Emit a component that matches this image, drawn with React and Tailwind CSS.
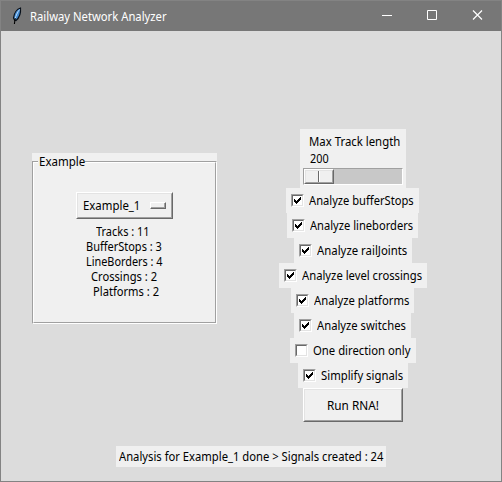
import React, { useLayoutEffect, useRef } from 'react';

// Text squeezed or stretched horizontally to a fixed width.
function Label({ width, children, className = '' }) {
  const outer = useRef(null);
  const inner = useRef(null);
  useLayoutEffect(() => {
    inner.current.style.transform = `scaleX(${outer.current.offsetWidth / inner.current.offsetWidth})`;
  }, [children]);
  return (
    <span ref={outer} className={`block shrink-0 whitespace-nowrap ${width} ${className}`}>
      <span ref={inner} className="inline-block origin-left">{children}</span>
    </span>
  );
}

function Raised({ className = '', children }) {
  return (
    <div className={`border border-t-white border-l-white border-r-[#696969] border-b-[#696969] bg-[#f0f0f0] ${className}`}>
      <div className="flex h-full items-center border border-t-[#e3e3e3] border-l-[#e3e3e3] border-r-[#a0a0a0] border-b-[#a0a0a0]">
        {children}
      </div>
    </div>
  );
}

function CheckRow({ row, text, label, checked = true }) {
  return (
    <label className={`flex h-[25px] items-start bg-[#f0f0f0] pl-[5px] ${row}`}>
      <span className="mt-[6px] block h-[13px] w-[13px] shrink-0 border border-t-[#a0a0a0] border-l-[#a0a0a0] border-r-white border-b-white">
        <span className="block h-[11px] w-[11px] border border-t-[#696969] border-l-[#696969] border-r-[#e3e3e3] border-b-[#e3e3e3] bg-white">
          {checked && (
            <svg viewBox="0 0 9 9" className="block h-[9px] w-[9px]" shapeRendering="crispEdges">
              <path d="M1 3h1v1h1v1h1v-1h1v-1h1v-1h1v-1h1v3h-1v1h-1v1h-1v1h-1v1h-1v-1h-1v-1h-1z" fill="#000" />
            </svg>
          )}
        </span>
      </span>
      <Label width={text} className="mt-[4px] ml-[5px]">{label}</Label>
    </label>
  );
}

export default function App() {
  return (
    <div className="flex h-[482px] w-[502px] flex-col overflow-hidden border border-t-0 border-[#838383] bg-[#dcdcdc] font-['Noto_Sans','Open_Sans',sans-serif] text-[12px] leading-[17px] text-black">
      <header className="flex h-[31px] shrink-0 items-center border-t border-[#838383] bg-[#777777] text-white">
        <svg viewBox="0 0 12 18" className="ml-[10px] h-[18px] w-[12px] shrink-0">
          <path d="M9.5 1C6 2 3 6 2.5 11l1 2L5 13.5C8 11 10 7 9.5 1z" fill="#4289cf" stroke="#080f18" strokeWidth="1.2" />
          <path d="M8.6 2.5C6.5 5 4.8 9 4 12" stroke="#b9ddff" strokeWidth="1" fill="none" />
          <path d="M4.2 11L3.4 17" stroke="#000" strokeWidth="1.1" />
        </svg>
        <Label width="w-[137px]" className="ml-[7px]">Railway Network Analyzer</Label>
        <svg viewBox="0 0 142 30" className="ml-auto h-[30px] w-[142px] shrink-0" fill="none" stroke="#fff">
          <path d="M23 14.5h10" />
          <path d="M68.5 9.500h9v9h-9z" />
          <path d="M114 9.500l9 9m0-9l-9 9" strokeWidth="1.200" />
        </svg>
      </header>

      <main className="flex h-[407px] shrink-0">
        <section className="mt-[122px] ml-[31px] h-[171px] w-[185px] shrink-0 bg-[#f0f0f0] pt-[8px]">
          <div className="h-[163px] border border-t-[#a0a0a0] border-l-[#a0a0a0] border-r-white border-b-white">
            <div className="flex h-full flex-col border border-t-white border-l-white border-r-[#a0a0a0] border-b-[#a0a0a0]">
              <div className="-mt-[10px] ml-[4px] w-[47px] bg-[#f0f0f0] pl-[1px]">
                <Label width="w-[46px]">Example</Label>
              </div>
              <Raised className="mt-[22px] ml-[42px] h-[27px] w-[97px]">
                <Label width="w-[57px]" className="ml-[5px]">Example_1</Label>
                <span className="ml-[10px] block h-[7px] w-[16px] border border-t-white border-l-white border-r-[#696969] border-b-[#696969]">
                  <span className="block h-full border-r border-b border-[#a0a0a0]" />
                </span>
              </Raised>
              <div className="mt-[5px] leading-[15px]">
                <Label width="w-[54px]" className="ml-[62px]">Tracks : 11</Label>
                <Label width="w-[76px]" className="ml-[52px]">BufferStops : 3</Label>
                <Label width="w-[77px]" className="ml-[52px]">LineBorders : 4</Label>
                <Label width="w-[66px]" className="ml-[57px]">Crossings : 2</Label>
                <Label width="w-[66px]" className="ml-[59px]">Platforms : 2</Label>
              </div>
            </div>
          </div>
        </section>

        <section className="mt-[98px] ml-[62px] flex w-[148px] shrink-0 flex-col">
          <div className="ml-[21px] h-[59px] w-[106px] bg-[#f0f0f0] pt-[4px] pl-[3px]">
            <Label width="w-[91px]" className="ml-[6px]">Max Track length</Label>
            <Label width="w-[19px]" className="ml-[7px]">200</Label>
            <div className="mt-[1px] h-[17px] w-[100px] border border-t-[#a0a0a0] border-l-[#a0a0a0] border-r-white border-b-white bg-[#c8c8c8]">
              <Raised className="h-[15px] w-[30px]">
                <span className="ml-[12px] block h-full w-[2px] border-r border-r-white border-l border-l-[#696969]" />
              </Raised>
            </div>
          </div>
          <CheckRow row="ml-[7px] w-[133px]" text="w-[105px]" label="Analyze bufferStops" />
          <CheckRow row="ml-[8px] w-[131px]" text="w-[103px]" label="Analyze lineborders" />
          <CheckRow row="ml-[15px] w-[118px]" text="w-[90px]" label="Analyze railJoints" />
          <CheckRow row="ml-[0px] w-[148px]" text="w-[120px]" label="Analyze level crossings" />
          <CheckRow row="ml-[12px] w-[123px]" text="w-[95px]" label="Analyze platforms" />
          <CheckRow row="ml-[15px] w-[117px]" text="w-[89px]" label="Analyze switches" />
          <CheckRow row="ml-[11px] w-[126px]" text="w-[98px]" label="One direction only" checked={false} />
          <CheckRow row="ml-[19px] w-[110px]" text="w-[82px]" label="Simplify signals" />
          <Raised className="ml-[24px] h-[34px] w-[100px]">
            <Label width="w-[52px]" className="ml-[22px]">Run RNA!</Label>
          </Raised>
        </section>
      </main>

      <footer className="mt-[8px] ml-[115px] flex h-[21px] w-[270px] shrink-0 items-center bg-[#f0f0f0] pl-[3px]">
        <Label width="w-[264px]">{'Analysis for Example_1 done > Signals created : 24'}</Label>
      </footer>
    </div>
  );
}
